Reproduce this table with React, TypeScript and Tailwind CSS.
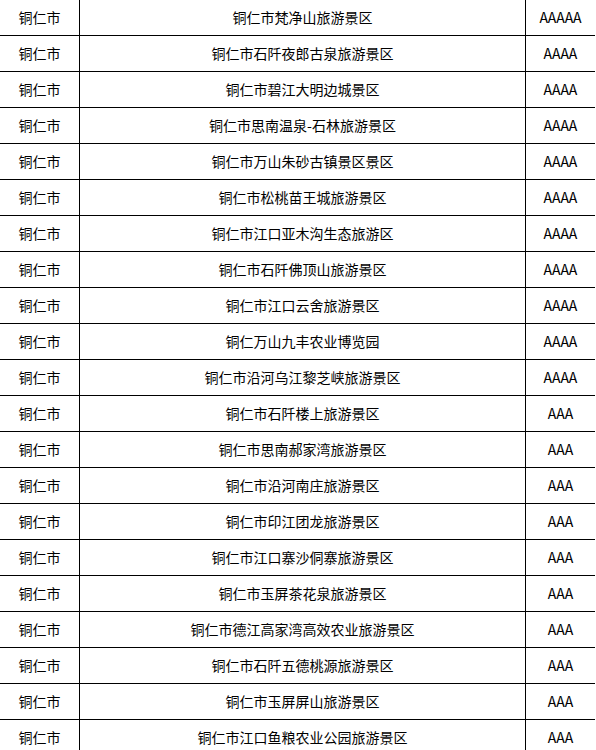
const rows: [string, string][] = [
  ["铜仁市梵净山旅游景区", "AAAAA"],
  ["铜仁市石阡夜郎古泉旅游景区", "AAAA"],
  ["铜仁市碧江大明边城景区", "AAAA"],
  ["铜仁市思南温泉-石林旅游景区", "AAAA"],
  ["铜仁市万山朱砂古镇景区景区", "AAAA"],
  ["铜仁市松桃苗王城旅游景区", "AAAA"],
  ["铜仁市江口亚木沟生态旅游区", "AAAA"],
  ["铜仁市石阡佛顶山旅游景区", "AAAA"],
  ["铜仁市江口云舍旅游景区", "AAAA"],
  ["铜仁万山九丰农业博览园", "AAAA"],
  ["铜仁市沿河乌江黎芝峡旅游景区", "AAAA"],
  ["铜仁市石阡楼上旅游景区", "AAA"],
  ["铜仁市思南郝家湾旅游景区", "AAA"],
  ["铜仁市沿河南庄旅游景区", "AAA"],
  ["铜仁市印江团龙旅游景区", "AAA"],
  ["铜仁市江口寨沙侗寨旅游景区", "AAA"],
  ["铜仁市玉屏茶花泉旅游景区", "AAA"],
  ["铜仁市德江高家湾高效农业旅游景区", "AAA"],
  ["铜仁市石阡五德桃源旅游景区", "AAA"],
  ["铜仁市玉屏屏山旅游景区", "AAA"],
  ["铜仁市江口鱼粮农业公园旅游景区", "AAA"],
];

export default function App() {
  return (
    <div className="w-[596px] h-[750px] overflow-hidden bg-white text-black text-[14px] font-['Microsoft_YaHei','Noto_Sans_CJK_SC',sans-serif]">
      <div className="w-[595px]">
        {rows.map(([name, level], i) => (
          <div key={i} className="flex h-[36px] border-b border-black">
            <div className="w-[80px] border-r border-black flex items-center justify-center">铜仁市</div>
            <div className="w-[446px] border-r border-black flex items-center justify-center">{name}</div>
            <div className="flex-1 flex items-center justify-center">{level}</div>
          </div>
        ))}
      </div>
    </div>
  );
}
